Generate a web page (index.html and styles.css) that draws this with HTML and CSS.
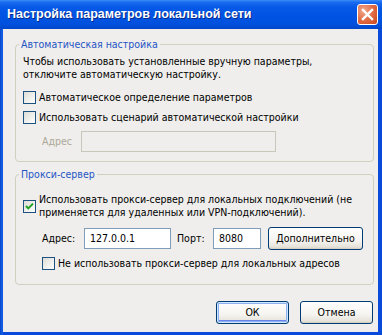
FILE: index.html
```html
<!DOCTYPE html>
<html lang="ru">
<head>
<meta charset="utf-8">
<title>Настройка параметров локальной сети</title>
<link rel="stylesheet" href="styles.css">
</head>
<body>
<div class="window">
  <div class="titlebar">
    <span class="title">Настройка параметров локальной сети</span>
    <span class="close"><svg width="13" height="13" viewBox="0 0 13 13"><path d="M2 2 L11 11 M11 2 L2 11" stroke="#fff" stroke-width="2.4" stroke-linecap="square"/></svg></span>
  </div>
  <div class="client">
    <fieldset class="group g1">
      <legend>Автоматическая настройка</legend>
      <p class="note">Чтобы использовать установленные вручную параметры,<br>отключите автоматическую настройку.</p>
      <div class="check c1"><span class="box"></span><span>Автоматическое определение параметров</span></div>
      <div class="check c2"><span class="box"></span><span>Использовать сценарий автоматической настройки</span></div>
      <div class="addr-row">
        <span class="lbl disabled">Адрес</span>
        <span class="input off wide"></span>
      </div>
    </fieldset>
    <fieldset class="group g2">
      <legend>Прокси-сервер</legend>
      <div class="check c3"><span class="box"><svg width="11" height="11" viewBox="0 0 11 11"><path d="M2 5 L4.3 7.4 L9 2.6" fill="none" stroke="#21A121" stroke-width="2"/></svg></span><span>Использовать прокси-сервер для локальных подключений (не<br>применяется для удаленных или VPN-подключений).</span></div>
      <div class="proxy-row">
        <span class="lbl">Адрес:</span>
        <span class="input ip">127.0.0.1</span>
        <span class="lbl port">Порт:</span>
        <span class="input pt">8080</span>
        <button class="btn more">Дополнительно</button>
      </div>
      <div class="check c4"><span class="box"></span><span>Не использовать прокси-сервер для локальных адресов</span></div>
    </fieldset>
    <div class="actions">
      <button class="btn default">ОК</button>
      <button class="btn">Отмена</button>
    </div>
  </div>
</div>
</body>
</html>
```
FILE: styles.css
```css
* { box-sizing: border-box; }
html, body { margin: 0; padding: 0; }
body {
  width: 382px;
  height: 335px;
  overflow: hidden;
  background: #0A4ADB;
  font-family: "DejaVu Sans Condensed", "DejaVu Sans", sans-serif;
  font-stretch: condensed;
  font-size: 10.5px;
  line-height: 13px;
  color: #000;
}
.window {
  height: 335px;
  display: flex;
  flex-direction: column;
  background: linear-gradient(90deg, #0842C8, #1664E8 2px, #0A4ADB 3px);
}
.titlebar {
  height: 29px;
  flex: none;
  display: flex;
  align-items: center;
  justify-content: space-between;
  padding: 0 4px 1px 7px;
  background: linear-gradient(#3A8CF6 0%, #1A6AF0 8%, #0659E6 25%, #0054E3 55%, #0050DC 85%, #0046C8 100%);
}
.title {
  color: #fff;
  font: bold 12.5px "Liberation Sans", sans-serif;
  text-shadow: 1px 1px 0 #0A2A8A;
}
.close {
  width: 21px;
  height: 21px;
  border: 1px solid #fff;
  border-radius: 3px;
  background: radial-gradient(circle at 30% 30%, #F0A88C, #E0683F 55%, #C7451F);
  display: flex;
  align-items: center;
  justify-content: center;
}
.client {
  flex: 1;
  margin: 0 4px 3px 3px;
  background: #EFEEEC;
  padding: 9px 4px 0 12px;
  display: flex;
  flex-direction: column;
}
.group {
  margin: 0;
  width: 359px;
  border: 1px solid #D0D0BF;
  border-radius: 4px;
  padding: 4px 8px 9px 7px;
  display: flex;
  flex-direction: column;
  min-width: 0;
}
.group legend {
  color: #1F55C6;
  padding: 0 2px;
  margin-left: -4px;
  line-height: 13px;
}
.note { margin: 0 0 10px 0; white-space: nowrap; }
.check {
  display: flex;
  align-items: center;
  gap: 3px;
  white-space: nowrap;
}
.box {
  width: 13px;
  height: 13px;
  flex: none;
  border: 1px solid #1C5180;
  background: linear-gradient(135deg, #DCDCD7, #FFFFFF);
  display: flex;
  align-items: center;
  justify-content: center;
}
.c2 { margin-top: 7px; }
.addr-row {
  margin-top: 7px;
  display: flex;
  align-items: center;
  padding-left: 19px;
}
.lbl.disabled { color: #ACA899; width: 39px; }
.input {
  height: 21px;
  border: 1px solid #7F9DB9;
  background: #fff;
  padding: 0 5px;
  display: flex;
  align-items: center;
}
.input.off { border-color: #C9C7BA; background: transparent; }
.wide { width: 195px; }
.g2 { margin-top: 6px; padding-bottom: 14px; }
.c3 { margin-top: 8px; }
.proxy-row {
  margin-top: 8px;
  display: flex;
  align-items: center;
  padding-left: 19px;
  white-space: nowrap;
}
.proxy-row .lbl { width: 42px; }
.ip { width: 87px; }
.proxy-row .port { width: 36px; margin-left: 6px; }
.pt { width: 48px; }
.btn {
  height: 23px;
  border: 1px solid #003C74;
  border-radius: 3px;
  background: linear-gradient(#FFFFFF, #F5F4F0 60%, #E6E3DA 90%, #D6D0C5);
  font: inherit;
  color: #000;
  padding: 0;
  box-shadow: inset 0 -1px 0 #D6D0C5;
}
.more { width: 95px; margin-left: 7px; }
.c4 { margin-top: 7px; padding-left: 19px; }
.actions {
  margin-top: 16px;
  display: flex;
  justify-content: flex-end;
  gap: 11px;
  padding-right: 1px;
}
.actions .btn { width: 73px; }
.btn.default { box-shadow: inset 0 0 0 1px #CEE7FF, inset 0 0 0 2px #8CB0F0, inset 0 -2px 0 1px #6982EE; }
```
